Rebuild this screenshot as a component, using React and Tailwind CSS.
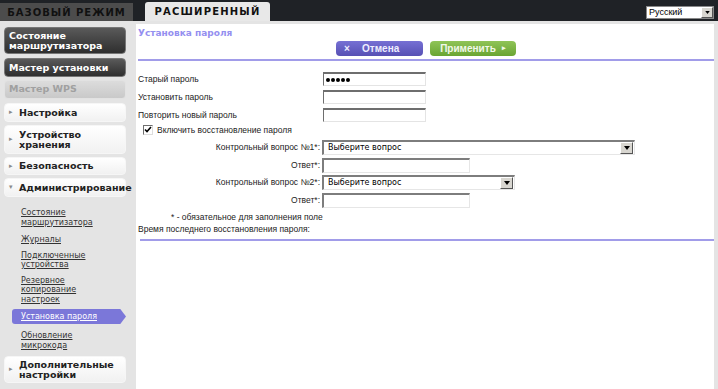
import React from 'react';

const ui = { fontFamily: '"DejaVu Sans", Verdana, sans-serif' };
const form = { fontFamily: '"Liberation Sans", Arial, sans-serif' };

function Arrow({ down }) {
  return (
    <span className="inline-block text-[#8a8a8a] text-[7px] leading-none w-[10px] shrink-0">
      {down ? '▾' : '▸'}
    </span>
  );
}

function DarkBtn({ children, h }) {
  return (
    <div className={`w-[122px] ${h} rounded-[4px] bg-gradient-to-b from-[#5a5a5a] to-[#2f2f2f] border border-[#777] text-white font-bold text-[9.5px] leading-[10px] px-[4px] flex items-center`}>
      <div>{children}</div>
    </div>
  );
}

function LightBtn({ children, h, down }) {
  return (
    <div className={`w-[122px] ${h} rounded-[4px] bg-gradient-to-b from-white to-[#f1f1f1] border border-[#f6f6f6] text-[#222] font-bold text-[9.5px] leading-[10px] px-[4px] flex items-center`}>
      <Arrow down={down} />
      <div>{children}</div>
    </div>
  );
}

function SubLink({ children, mt }) {
  return (
    <div className={`${mt} pl-[17px] text-[8px] leading-[9.5px] text-[#333] underline`}>{children}</div>
  );
}

function Sunken({ w, children }) {
  return (
    <div className={`${w} h-[15px] bg-white border-t-2 border-l-2 border-[#7d7d7d] border-r border-b border-r-[#e6e6e6] border-b-[#e6e6e6] flex items-center`}>
      {children}
    </div>
  );
}

function SelectBox({ w }) {
  return (
    <Sunken w={w}>
      <span className="flex-1 pl-[4px] text-[8px] text-black" style={ui}>Выберите вопрос</span>
      <span className="w-[13px] h-[12px] mr-[1px] bg-[#d8d6d0] border border-t-white border-l-white border-r-[#555] border-b-[#555] flex items-center justify-center">
        <svg width="6" height="4" viewBox="0 0 6 4"><path d="M0 0h6L3 4z" fill="#000" /></svg>
      </span>
    </Sunken>
  );
}

export default function App() {
  return (
    <div className="w-[718px] h-[389px] overflow-hidden bg-[#e4e4e4] flex flex-col" style={ui}>
      {/* top bar */}
      <div className="h-[21px] bg-[#1f2226] flex items-end shrink-0 relative">
        <div className="w-[133px] h-[18px] bg-[#4c4c4c] flex items-center justify-center text-[10px] font-bold tracking-[1px] text-[#111]">
          БАЗОВЫЙ РЕЖИМ
        </div>
        <div className="ml-[12px] w-[125px] h-[19px] rounded-t-[3px] bg-[#e8e8e8] flex items-center justify-center text-[10px] font-bold tracking-[1.2px] text-[#111]">
          РАСШИРЕННЫЙ
        </div>
        <div className="absolute left-[646px] top-[6px] w-[68px] h-[13px] bg-white border border-[#888] flex items-center">
          <span className="flex-1 pl-[2px] text-[9px] leading-none text-black" style={form}>Русский</span>
          <span className="w-[12px] h-[11px] bg-[#d8d6d0] border border-t-white border-l-white border-r-[#555] border-b-[#555] flex items-center justify-center">
            <svg width="5" height="3" viewBox="0 0 6 4"><path d="M0 0h6L3 4z" fill="#000" /></svg>
          </span>
        </div>
      </div>

      <div className="flex flex-1 min-h-0">
        {/* sidebar */}
        <div className="w-[136px] shrink-0 pl-[4px] pt-[6px] flex flex-col">
          <DarkBtn h="h-[27px]">Состояние<br />маршрутизатора</DarkBtn>
          <div className="mt-[4px]"><DarkBtn h="h-[19px]">Мастер установки</DarkBtn></div>
          <div className="mt-[3px] w-[122px] h-[19px] rounded-[4px] bg-gradient-to-b from-[#dcdcdc] to-[#c9c9c9] border border-[#e2e2e2] text-[#a0a0a0] font-bold text-[9.5px] px-[4px] flex items-center">
            Мастер WPS
          </div>
          <div className="mt-[4px]"><LightBtn h="h-[19px]">Настройка</LightBtn></div>
          <div className="mt-[3px]"><LightBtn h="h-[29px]">Устройство<br />хранения</LightBtn></div>
          <div className="mt-[3px]"><LightBtn h="h-[18px]">Безопасность</LightBtn></div>
          <div className="mt-[3px]"><LightBtn h="h-[19px]" down>Администрирование</LightBtn></div>
          <SubLink mt="mt-[11px]">Состояние<br />маршрутизатора</SubLink>
          <SubLink mt="mt-[8px]">Журналы</SubLink>
          <SubLink mt="mt-[6px]">Подключенные<br />устройства</SubLink>
          <SubLink mt="mt-[6px]">Резервное<br />копирование<br />настроек</SubLink>
          <div className="mt-[5px] ml-[8px] w-[114px] h-[15px] rounded-l-[3px] bg-[#7b77d9] [clip-path:polygon(0_0,95%_0,100%_50%,95%_100%,0_100%)] flex items-center pl-[9px] text-[8px] text-white underline">
            Установка пароля
          </div>
          <SubLink mt="mt-[7px]">Обновление<br />микрокода</SubLink>
          <div className="mt-[6px]"><LightBtn h="h-[27px]">Дополнительные<br />настройки</LightBtn></div>
        </div>

        {/* content */}
        <div className="flex-1 mr-[4px] mt-[3px] bg-white pl-[2px] flex flex-col">
          <div className="mt-[3px] text-[9px] leading-[12px] font-bold text-[#948ff0]">Установка пароля</div>
          <div className="mt-[2px] flex justify-center gap-[7px]">
            <div className="w-[87px] h-[15px] rounded-[4px] bg-gradient-to-b from-[#7670d4] to-[#5750b4] flex items-center text-[#eeeeff] text-[10px] font-bold" style={form}>
              <span className="pl-[8px] w-[26px] text-[10px]">×</span>
              <span>Отмена</span>
            </div>
            <div className="w-[86px] h-[15px] rounded-[4px] bg-gradient-to-b from-[#8fc457] to-[#6aa532] flex items-center justify-center gap-[6px] text-[#f2f8ea] text-[10px] font-bold" style={form}>
              <span>Применить</span>
              <span className="text-[7px]">▸</span>
            </div>
          </div>
          <div className="mt-[3px] h-[2px] bg-[#a19ce9]" />

          <div className="text-[8.5px] text-[#222]" style={form}>
            {[['Старый пароль', true], ['Установить пароль', false], ['Повторить новый пароль', false]].map(([label, dots], i) => (
              <div key={label} className={`flex items-center ${i === 0 ? 'mt-[11px]' : 'mt-[4px]'}`}>
                <span className="w-[185px] leading-[14px]">{label}</span>
                <div className="w-[103px] h-[14px] bg-white border-t-2 border-l border-[#6e6e6e] border-r border-b border-r-[#e4e4e4] border-b-[#e4e4e4] flex items-center pl-[2px] gap-[1px]">
                  {dots && [0, 1, 2, 3, 4].map((d) => (
                    <span key={d} className="w-[4px] h-[4px] rounded-full bg-black" />
                  ))}
                </div>
              </div>
            ))}

            <div className="mt-[3px] ml-[5px] flex items-center h-[10px]">
              <div className="w-[10px] h-[10px] bg-white border-t border-l border-[#6e6e6e] border-r border-b border-r-[#ddd] border-b-[#ddd] flex items-center justify-center">
                <svg width="8" height="8" viewBox="0 0 8 8"><path d="M1 3.5l2 2 4-4.5" stroke="#000" strokeWidth="1.6" fill="none" /></svg>
              </div>
              <span className="ml-[4px]">Включить восстановление пароля</span>
            </div>

            <div className="mt-[5px] flex items-center">
              <span className="w-[184px] text-right pr-[2px]">Контрольный вопрос №1*:</span>
              <SelectBox w="w-[313px]" />
            </div>
            <div className="mt-[3px] flex items-center">
              <span className="w-[184px] text-right pr-[2px]">Ответ*:</span>
              <Sunken w="w-[148px]" />
            </div>
            <div className="mt-[2px] flex items-center">
              <span className="w-[184px] text-right pr-[2px]">Контрольный вопрос №2*:</span>
              <SelectBox w="w-[193px]" />
            </div>
            <div className="mt-[3px] flex items-center">
              <span className="w-[184px] text-right pr-[2px]">Ответ*:</span>
              <Sunken w="w-[148px]" />
            </div>
            <div className="mt-[4px] ml-[33px] leading-[10px]">* - обязательное для заполнения поле</div>
            <div className="mt-[2px] leading-[10px]">Время последнего восстановления пароля:</div>
          </div>
          <div className="mt-[5px] ml-[2px] h-[2px] bg-[#a19ce9]" />
        </div>
      </div>
    </div>
  );
}
